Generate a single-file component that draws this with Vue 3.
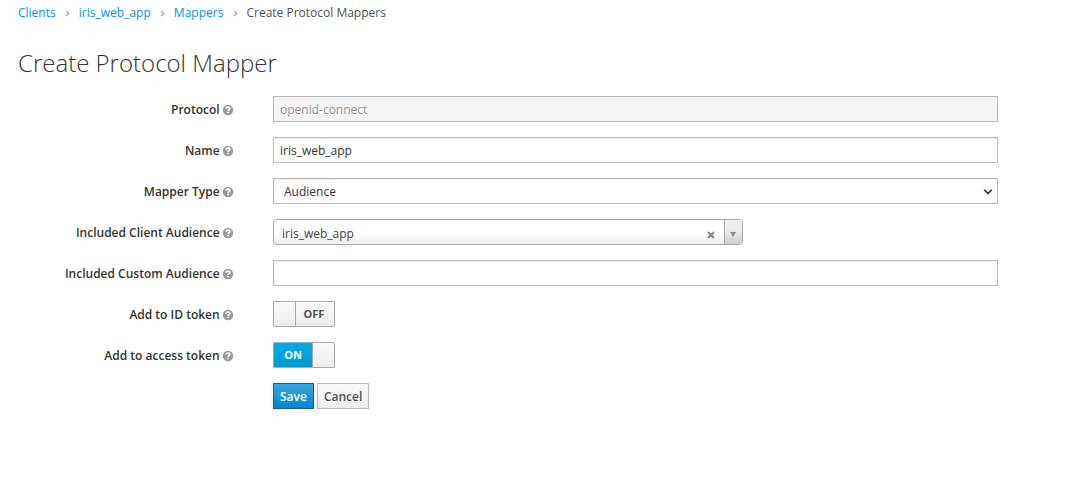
<script setup>
import { ref } from 'vue'

const crumbs = ['Clients', 'iris_web_app', 'Mappers']
const rows = [
  { label: 'Protocol', type: 'text', value: 'openid-connect', disabled: true },
  { label: 'Name', type: 'text', value: 'iris_web_app' },
  { label: 'Mapper Type', type: 'select', value: 'Audience' },
  { label: 'Included Client Audience', type: 'combo', value: 'iris_web_app' },
  { label: 'Included Custom Audience', type: 'text', value: '' },
  { label: 'Add to ID token', type: 'switch', on: ref(false) },
  { label: 'Add to access token', type: 'switch', on: ref(true) }
]
</script>

<template>
  <main class="page">
    <nav class="breadcrumb">
      <template v-for="c in crumbs" :key="c">
        <a>{{ c }}</a>
        <svg class="sep" width="5" height="7" viewBox="0 0 5 7"><path d="M1 .8 3.8 3.5 1 6.2" /></svg>
      </template>
      <span>Create Protocol Mappers</span>
    </nav>
    <h1>Create Protocol Mapper</h1>

    <form @submit.prevent>
      <div v-for="row in rows" :key="row.label" class="row">
        <div class="label">
          <label>{{ row.label }}</label>
          <svg class="help" width="10" height="10" viewBox="0 0 10 10">
            <circle cx="5" cy="5" r="5.2" />
            <path d="M3 3.7C3.2 2.6 4 2.2 5 2.2c1.1 0 1.8.6 1.8 1.4C6.8 4.7 5.1 4.6 5.1 6" />
            <rect x="4.2" y="6.8" width="1.7" height="1.5" />
          </svg>
        </div>

        <input v-if="row.type === 'text'" class="field" type="text" :value="row.value" :disabled="row.disabled">

        <div v-else-if="row.type === 'select'" class="select">
          <select class="field"><option>{{ row.value }}</option></select>
          <svg class="chevron" width="10" height="6" viewBox="0 0 10 6"><path d="M1.2 .8 5 4.5 8.8 .8" /></svg>
        </div>

        <div v-else-if="row.type === 'combo'" class="combo">
          <span class="chosen">{{ row.value }}</span>
          <svg class="clear" width="8" height="8" viewBox="0 0 8 8"><path d="M1 1 7 7M7 1 1 7" /></svg>
          <span class="drop"><svg width="6" height="5" viewBox="0 0 6 5"><path d="M0 0H6L3 5Z" /></svg></span>
        </div>

        <button v-else type="button" class="switch" :class="{ on: row.on.value }" @click="row.on.value = !row.on.value">
          <span class="state">{{ row.on.value ? 'ON' : 'OFF' }}</span>
          <span class="knob"></span>
        </button>
      </div>

      <div class="actions">
        <button class="btn primary">Save</button>
        <button class="btn" type="button">Cancel</button>
      </div>
    </form>
  </main>
</template>

<style>
body { background: #fff; }
</style>

<style scoped>
* { box-sizing: border-box; }
.page {
  padding: 4px 18px 0;
  font: 12px/18px "Open Sans", "Noto Sans", sans-serif;
  color: #4d5258;
}
.breadcrumb { display: flex; align-items: center; height: 18px; }
.breadcrumb a { color: #0099d3; }
.sep { margin: 1px 8.6px 0 9.5px; fill: none; stroke: #9c9c9c; stroke-width: 1.1; }
h1 {
  margin: 27px 0 20px;
  font-size: 24px;
  line-height: 27px;
  font-weight: 300;
  color: #333;
}
.row { display: flex; height: 26px; margin-bottom: 15px; }
.label {
  display: flex;
  align-items: center;
  justify-content: flex-end;
  gap: 3.4px;
  width: 215px;
  margin-right: 40px;
  font-weight: 600;
  color: #333;
}
.label label { padding-top: 2px; }
.help { fill: #999; margin-top: 1px; overflow: visible; }
.help path { fill: none; stroke: #fff; stroke-width: 1.7; }
.help rect { fill: #fff; }
.field {
  width: 725px;
  height: 26px;
  padding: 2px 6px;
  border: 1px solid #bababa;
  border-radius: 0;
  background: #fff;
  box-shadow: inset 0 1px 1px rgba(0, 0, 0, .075);
  font: inherit;
  color: #333;
  outline: 0;
}
.field:disabled { background: #f4f4f4; color: #999; box-shadow: none; }
.select { position: relative; }
.select .field { appearance: none; padding: 2px 10px 0; }
.chevron {
  position: absolute;
  right: 5px;
  top: 11px;
  fill: none;
  stroke: #222;
  stroke-width: 1.6;
  pointer-events: none;
}
.combo {
  display: flex;
  align-items: center;
  width: 470px;
  height: 26px;
  border: 1px solid #aaa;
  border-radius: 4px;
  background: linear-gradient(#fff 50%, #eee);
  color: #444;
  overflow: hidden;
}
.chosen { flex: 1; padding: 3px 0 0 8px; }
.clear { margin: 5px 9px 0 0; fill: none; stroke: #888; stroke-width: 2.3; }
.drop {
  display: flex;
  align-items: center;
  width: 18px;
  height: 24px;
  padding: 4px 0 0 5px;
  border-left: 1px solid #aaa;
  background: linear-gradient(#eee 40%, #ccc);
  fill: #888;
}
.switch {
  display: flex;
  flex-direction: row-reverse;
  width: 62px;
  height: 26px;
  padding: 0;
  border: 1px solid #aaa;
  border-radius: 1px;
  background: linear-gradient(#fafafa, #ededed);
  font: 700 11px/24px "Open Sans", "Noto Sans", sans-serif;
  color: #4d5258;
}
.state { flex: 1; padding-right: 2px; text-align: center; }
.knob {
  width: 22px;
  height: 24px;
  border-right: 1px solid #aaa;
  background: linear-gradient(#fafafa, #ededed);
}
.switch.on { flex-direction: row; color: #fff; }
.on .state { padding-right: 0; background: linear-gradient(#00a9ec, #009bd3); }
.on .knob { border-right: 0; border-left: 1px solid #aaa; }
.actions { display: flex; gap: 3px; margin-left: 255px; }
.btn {
  height: 26px;
  padding: 2px 6px 0;
  border: 1px solid #bbb;
  border-radius: 0;
  background: linear-gradient(#fafafa, #ededed);
  box-shadow: 0 2px 3px rgba(3, 3, 3, .1);
  font: 600 12px/22px "Open Sans", "Noto Sans", sans-serif;
  color: #4d5258;
}
.primary {
  border-color: #00659c;
  background: linear-gradient(#39a5dc, #0088ce);
  color: #fff;
}
</style>
